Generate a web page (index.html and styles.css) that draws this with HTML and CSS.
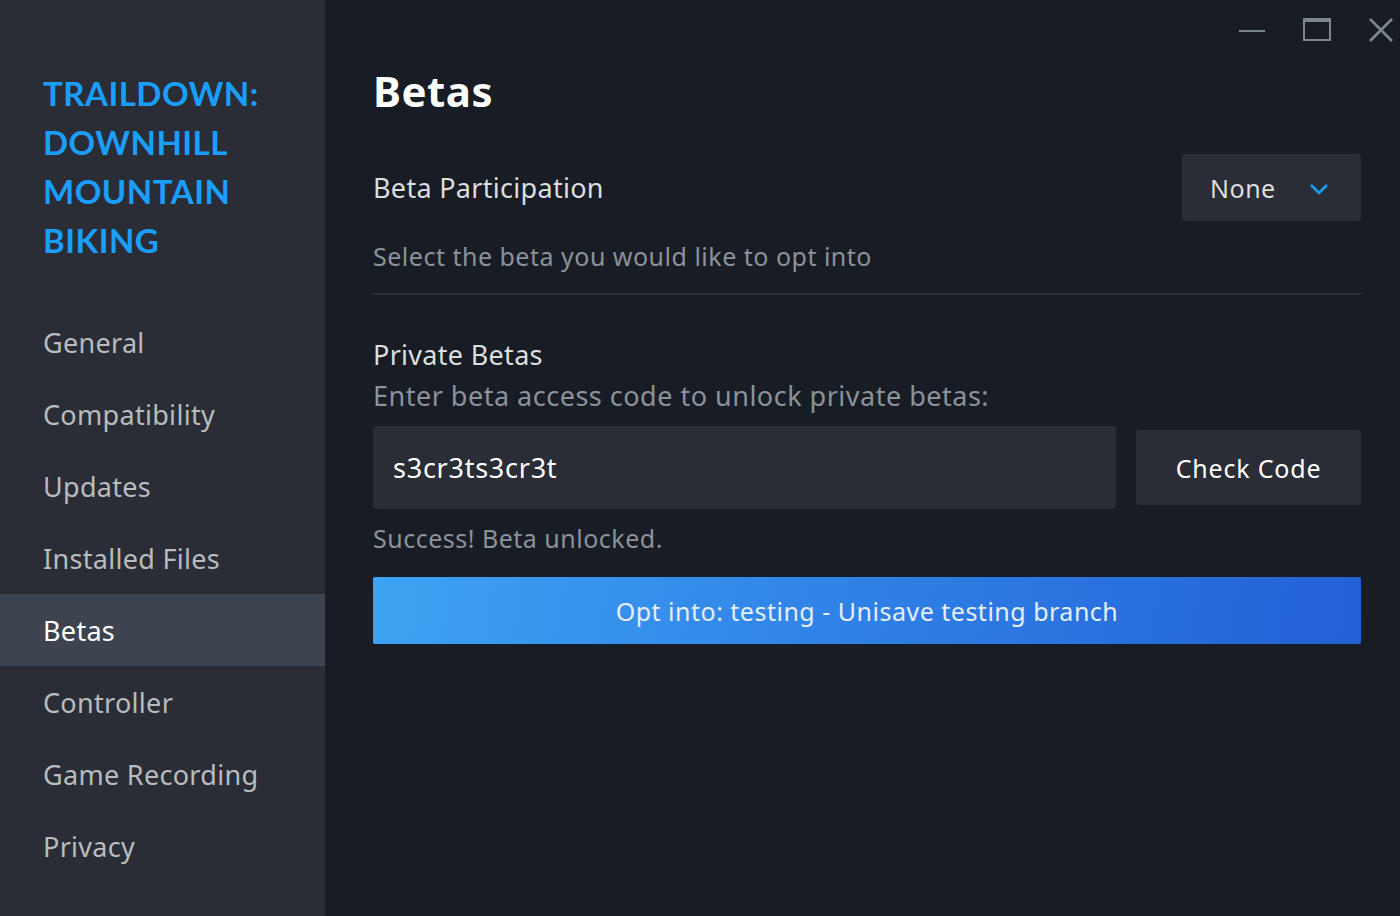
FILE: index.html
```html
<!DOCTYPE html>
<html lang="en">
<head>
<meta charset="utf-8">
<title>Betas</title>
<link rel="stylesheet" href="styles.css">
</head>
<body>
<div class="app">
  <aside class="sidebar">
    <h1 class="game-title">TRAILDOWN: DOWNHILL MOUNTAIN BIKING</h1>
    <nav class="nav">
      <div class="nav-item">General</div>
      <div class="nav-item">Compatibility</div>
      <div class="nav-item">Updates</div>
      <div class="nav-item">Installed Files</div>
      <div class="nav-item active">Betas</div>
      <div class="nav-item">Controller</div>
      <div class="nav-item">Game Recording</div>
      <div class="nav-item">Privacy</div>
    </nav>
  </aside>
  <main class="main">
    <div class="window-controls">
      <svg class="wc wc-min" width="28" height="28" viewBox="0 0 28 28"><line x1="1" y1="15" x2="27" y2="15" stroke="currentColor" stroke-width="2"/></svg>
      <svg class="wc wc-max" width="30" height="26" viewBox="0 0 30 26"><rect x="2" y="2" width="26" height="21" fill="none" stroke="currentColor" stroke-width="2"/><rect x="1" y="1" width="28" height="4" fill="currentColor"/></svg>
      <svg class="wc wc-close" width="26" height="26" viewBox="0 0 26 26"><path d="M2 2 L24 24 M24 2 L2 24" stroke="currentColor" stroke-width="2.6" fill="none"/></svg>
    </div>
    <h2 class="page-title">Betas</h2>
    <div class="row participation">
      <div class="label">Beta Participation</div>
      <div class="dropdown">
        <span class="dropdown-value">None</span>
        <svg class="chevron" width="20" height="12" viewBox="0 0 20 12"><path d="M2 2 L10 10 L18 2" stroke="#1a9fff" stroke-width="2.6" fill="none"/></svg>
      </div>
    </div>
    <div class="hint">Select the beta you would like to opt into</div>
    <div class="divider"></div>
    <div class="label private-label">Private Betas</div>
    <div class="hint hint-lg">Enter beta access code to unlock private betas:</div>
    <div class="row code-row">
      <div class="code-input">s3cr3ts3cr3t</div>
      <div class="check-btn">Check Code</div>
    </div>
    <div class="hint success">Success! Beta unlocked.</div>
    <div class="opt-btn">Opt into: testing - Unisave testing branch</div>
  </main>
</div>
</body>
</html>
```

FILE: styles.css
```css
* { box-sizing: border-box; }
html, body {
  margin: 0;
  padding: 0;
  width: 1400px;
  height: 916px;
  overflow: hidden;
  background: #181c24;
  font-family: "Noto Sans", "Open Sans", sans-serif;
}
.app {
  display: flex;
  width: 1400px;
  height: 916px;
}
.sidebar {
  width: 325px;
  flex: 0 0 325px;
  background: #2a2d35;
  padding-top: 69px;
}
.game-title {
  margin: 0 0 41px 0;
  padding: 0 43px;
  font-family: "Lato", "Noto Sans", sans-serif;
  font-weight: 700;
  font-size: 33px;
  line-height: 49px;
  letter-spacing: 0.5px;
  color: #1a9fff;
}
.nav {
  display: flex;
  flex-direction: column;
}
.nav-item {
  height: 72px;
  display: flex;
  align-items: center;
  padding-left: 43px;
  font-size: 27px;
  letter-spacing: 0.3px;
  color: #b8bcbf;
}
.nav-item.active {
  background: #3d4450;
  color: #ffffff;
}
.main {
  position: relative;
  flex: 1;
  padding: 67px 39px 0 48px;
}
.window-controls {
  position: absolute;
  top: 16px;
  right: 6px;
  display: flex;
  align-items: center;
  gap: 36px;
  color: #7b878c;
}
.wc { display: block; }
.page-title {
  margin: 0;
  font-size: 42px;
  line-height: 48px;
  font-weight: 700;
  letter-spacing: 0.5px;
  color: #ffffff;
}
.row {
  display: flex;
  align-items: center;
  justify-content: space-between;
}
.participation {
  margin-top: 39px;
}
.label {
  font-size: 27px;
  line-height: 32px;
  letter-spacing: 0.3px;
  color: #dcdedf;
}
.dropdown {
  width: 179px;
  height: 67px;
  background: #2a2d35;
  border-radius: 3px;
  display: flex;
  align-items: center;
  padding-left: 28px;
  gap: 33px;
}
.dropdown-value {
  font-size: 25px;
  letter-spacing: 0.5px;
  color: #dcdedf;
}
.chevron { display: block; margin-top: 2px; }
.hint {
  font-size: 25px;
  line-height: 32px;
  letter-spacing: 0.5px;
  color: #8b929a;
  margin-top: 19px;
}
.divider {
  height: 2px;
  background: #2b2f38;
  margin-top: 21px;
}
.private-label {
  margin-top: 44px;
}
.hint-lg {
  margin-top: 9px;
  font-size: 27px;
}
.code-row {
  margin-top: 14px;
  gap: 20px;
}
.code-input {
  flex: 1;
  height: 83px;
  background: #2a2d35;
  border-radius: 4px;
  display: flex;
  align-items: center;
  padding-left: 20px;
  font-size: 27px;
  letter-spacing: 0.75px;
  color: #ffffff;
}
.check-btn {
  width: 225px;
  height: 75px;
  background: #2a2d35;
  border-radius: 3px;
  display: flex;
  align-items: center;
  justify-content: center;
  font-size: 25px;
  letter-spacing: 0.8px;
  color: #ffffff;
}
.success {
  margin-top: 13px;
}
.opt-btn {
  margin-top: 23px;
  height: 67px;
  border-radius: 2px;
  background: linear-gradient(100deg, #3ea3f2 0%, #2f80e6 50%, #2360d6 100%);
  display: flex;
  align-items: center;
  justify-content: center;
  font-size: 25px;
  letter-spacing: 0.5px;
  color: #e6eef9;
}
```
